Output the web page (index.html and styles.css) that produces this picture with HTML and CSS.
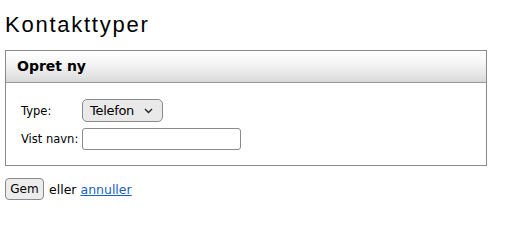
FILE: index.html
```html
<!DOCTYPE html>
<html lang="da">
<head>
<meta charset="utf-8">
<title>Kontakttyper</title>
<link rel="stylesheet" href="styles.css">
</head>
<body>
<h1 class="page-title">Kontakttyper</h1>
<div class="panel">
  <div class="panel-head">Opret ny</div>
  <div class="panel-body">
    <div class="form-grid">
      <label class="form-label" for="type">Type:</label>
      <div class="select-box" id="type">
        <span class="select-text">Telefon</span>
        <svg class="chev" width="9" height="6" viewBox="0 0 9 6"><path d="M1 1 L4.5 4.5 L8 1" fill="none" stroke="#222" stroke-width="1.4"/></svg>
      </div>
      <label class="form-label" for="navn">Vist navn:</label>
      <input class="text-input" id="navn" type="text">
    </div>
  </div>
</div>
<div class="actions">
  <button class="btn" type="button">Gem</button>
  <span class="or">eller</span>
  <a class="link" href="#">annuller</a>
</div>
</body>
</html>
```
FILE: styles.css
```css
html, body {
  margin: 0;
  padding: 0;
  background: #fff;
}
body {
  padding: 0 5px;
  font-family: "DejaVu Sans", Verdana, sans-serif;
  font-size: 12px;
  color: #000;
}
.page-title {
  margin: 0;
  padding-top: 11px;
  height: 50px;
  box-sizing: border-box;
  font-family: "Liberation Sans", Arial, sans-serif;
  font-weight: normal;
  font-size: 22px;
  letter-spacing: 1.75px;
  line-height: 28px;
}
.panel {
  width: 482px;
  box-sizing: border-box;
  border: 1px solid #8a8a8a;
}
.panel-head {
  height: 32px;
  box-sizing: border-box;
  border-bottom: 1px solid #9a9a9a;
  background: linear-gradient(#ffffff 0%, #f7f7f7 35%, #e6e6e6 75%, #d8d8d8 100%);
  padding-left: 11px;
  font-weight: bold;
  font-size: 14px;
  line-height: 31px;
}
.panel-body {
  padding: 16px 0 15px 15px;
}
.form-grid {
  display: grid;
  grid-template-columns: 61px auto;
  row-gap: 6px;
  align-items: center;
  justify-content: start;
}
.form-label {
  font-size: 11.5px;
}
.select-box {
  width: 81px;
  height: 23px;
  box-sizing: border-box;
  border: 1px solid #8a8a8a;
  border-radius: 5px;
  background: #e9e9e9;
  display: flex;
  align-items: center;
  padding: 0 9px 0 7px;
  justify-content: space-between;
}
.select-text {
  font-size: 13px;
  letter-spacing: -0.3px;
}
.chev {
  display: block;
}
.text-input {
  width: 159px;
  height: 22px;
  box-sizing: border-box;
  border: 1px solid #8a8a8a;
  border-radius: 3px;
  margin: 0;
  padding: 0 4px;
  font: inherit;
  background: #fff;
}
.actions {
  margin-top: 12px;
  display: flex;
  align-items: center;
  font-size: 12.5px;
}
.btn {
  width: 39px;
  height: 22px;
  box-sizing: border-box;
  border: 1px solid #8a8a8a;
  border-radius: 4px;
  background: #ececec;
  font-family: "DejaVu Sans", Verdana, sans-serif;
  font-size: 12px;
  padding: 0;
  margin: 0 5px 0 0;
  color: #000;
}
.or {
  margin-right: 4px;
}
.link {
  color: #1a5fc4;
  text-decoration: underline;
}
```
